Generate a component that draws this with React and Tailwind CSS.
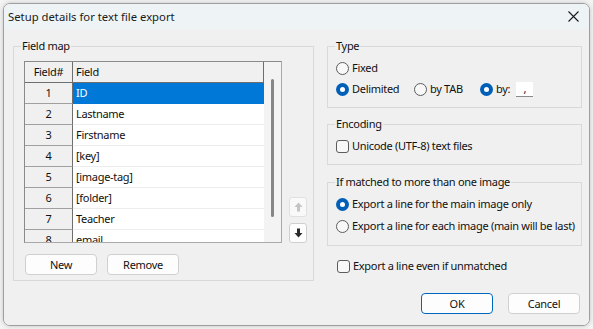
import React from "react";

const rows = [
  { n: 1, name: "ID" },
  { n: 2, name: "Lastname" },
  { n: 3, name: "Firstname" },
  { n: 4, name: "[key]" },
  { n: 5, name: "[image-tag]" },
  { n: 6, name: "[folder]" },
  { n: 7, name: "Teacher" },
  { n: 8, name: "email" },
];

const Radio = ({ checked }) =>
  checked ? (
    <span className="w-[13px] h-[13px] rounded-full bg-[#005fb8] flex items-center justify-center shrink-0">
      <span className="w-[5px] h-[5px] rounded-full bg-white" />
    </span>
  ) : (
    <span className="w-[13px] h-[13px] rounded-full border border-[#5c5c5c] bg-[#f8f8f8] shrink-0" />
  );

const Check = () => (
  <span className="w-[13px] h-[13px] rounded-[3px] border border-[#5c5c5c] bg-[#f8f8f8] shrink-0" />
);

const Option = ({ control, children }) => (
  <div className="flex items-center gap-[3px] h-[16px] leading-[16px] whitespace-nowrap">
    {control}
    <span>{children}</span>
  </div>
);

const Group = ({ label, className, children }) => (
  <fieldset className={`border border-[#d9d9d9] ${className}`}>
    <legend className="ml-[7px] px-[1px] leading-[16px]">{label}</legend>
    {children}
  </fieldset>
);

const Arrow = ({ down, color }) => (
  <svg width="9" height="10" viewBox="0 0 9 10" className={down ? "rotate-180" : ""}>
    <path d="M4.5 0.5 L8.5 5 H6 V9.5 H3 V5 H0.5 Z" fill={color} />
  </svg>
);

const Button = ({ children, primary, className = "" }) => (
  <button
    className={`h-[21px] w-[72px] rounded-[4px] bg-[#fdfdfd] leading-[16px] ${
      primary ? "border border-[#0067c0]" : "border border-[#d0d0d0]"
    } ${className}`}
  >
    {children}
  </button>
);

export default function App() {
  return (
    <div className="w-[593px] h-[329px] bg-[#f4f4f4] p-[3px] text-[11px] tracking-[-0.3px] text-[#111] font-['Noto_Sans',sans-serif]">
      <div className="w-[587px] h-[323px] flex flex-col rounded-[7px] border border-[#9e9e9e] overflow-hidden shadow-[0_0_5px_rgba(0,0,0,0.2)]">
        {/* Title bar */}
        <div className="h-[25px] bg-[#eef4f6] flex items-center justify-between pl-[4px] pr-[10px] shrink-0">
          <span className="leading-[16px] text-[11.3px] tracking-normal text-[#1a1a1a]">Setup details for text file export</span>
          <svg width="11" height="11" viewBox="0 0 11 11">
            <path d="M0.5 0.5 L10.5 10.5 M10.5 0.5 L0.5 10.5" stroke="#1a1a1a" strokeWidth="1.1" />
          </svg>
        </div>

        {/* Body */}
        <div className="flex-1 bg-[#f0f0f0] flex pl-[9px] pt-[9px] gap-[13px]">
          {/* Left column */}
          <Group label="Field map" className="w-[301px] h-[243px]">
            <div className="pl-[10px] pt-[7px]">
              <div className="flex items-end gap-[7px]">
                <div className="w-[258px] h-[182px] border border-[#a9a9a9] border-t-[#8a8a8a] border-l-[#8a8a8a] bg-white flex overflow-hidden">
                  <div className="w-[239px] flex flex-col">
                    <div className="flex h-[21px] shrink-0 bg-[#f0f0f0] border-b border-[#6e6e6e]">
                      <div className="w-[48px] border-r border-[#6e6e6e] text-center leading-[20px]">Field#</div>
                      <div className="w-[191px] border-r border-[#6e6e6e] pl-[3px] leading-[20px]">Field</div>
                    </div>
                    {rows.map((r) => (
                      <div key={r.n} className="flex h-[21px] shrink-0">
                        <div className="w-[48px] bg-[#f0f0f0] border-r border-[#6e6e6e] border-b border-b-[#a0a0a0] text-center leading-[20px]">
                          {r.n}
                        </div>
                        <div
                          className={`w-[191px] pl-[3px] leading-[20px] border-b ${
                            r.n === 1 ? "bg-[#0078d7] text-white border-[#0078d7]" : "border-[#ededed]"
                          }`}
                        >
                          {r.name}
                        </div>
                      </div>
                    ))}
                  </div>
                  <div className="w-[17px] bg-[#f3f3f3] pl-[7px] pt-[17px]">
                    <div className="w-[3px] h-[138px] rounded-full bg-[#868686]" />
                  </div>
                </div>
                <div className="flex flex-col gap-[6px]">
                  <div className="w-[18px] h-[20px] rounded-[3px] border border-[#e0e0e0] bg-[#f9f9f9] flex items-center justify-center">
                    <Arrow color="#c4c4c4" />
                  </div>
                  <div className="w-[18px] h-[20px] rounded-[3px] border border-[#cfcfcf] bg-[#fdfdfd] flex items-center justify-center">
                    <Arrow down color="#2b2b2b" />
                  </div>
                </div>
              </div>
              <div className="flex gap-[10px] mt-[11px] ml-[1px]">
                <Button>New</Button>
                <Button className="w-[71px]">Remove</Button>
              </div>
            </div>
          </Group>

          {/* Right column */}
          <div className="w-[255px] flex flex-col">
            <Group label="Type" className="h-[70px]">
              <div className="pl-[8px] pt-[6px] flex flex-col gap-[5px]">
                <Option control={<Radio />}>Fixed</Option>
                <div className="flex items-center">
                  <div className="w-[78px]">
                    <Option control={<Radio checked />}>Delimited</Option>
                  </div>
                  <div className="w-[66px]">
                    <Option control={<Radio />}>by TAB</Option>
                  </div>
                  <Option control={<Radio checked />}>by:</Option>
                  <div className="ml-[6px] w-[17px] h-[15px] bg-white border-b border-[#8a8a8a] text-center leading-[13px]">
                    ,
                  </div>
                </div>
              </div>
            </Group>

            <Group label="Encoding" className="h-[49px] mt-[8px]">
              <div className="pl-[8px] pt-[6px]">
                <Option control={<Check />}>Unicode (UTF-8) text files</Option>
              </div>
            </Group>

            <Group label="If matched to more than one image" className="h-[72px] mt-[9px]">
              <div className="pl-[8px] pt-[6px] flex flex-col gap-[6px]">
                <Option control={<Radio checked />}>Export a line for the main image only</Option>
                <Option control={<Radio />}>Export a line for each image (main will be last)</Option>
              </div>
            </Group>

            <div className="mt-[12px] pl-[10px]">
              <Option control={<Check />}>Export a line even if unmatched</Option>
            </div>

            <div className="mt-[19px] flex justify-end gap-[15px] pr-[2px]">
              <Button primary>OK</Button>
              <Button>Cancel</Button>
            </div>
          </div>
        </div>
      </div>
    </div>
  );
}
